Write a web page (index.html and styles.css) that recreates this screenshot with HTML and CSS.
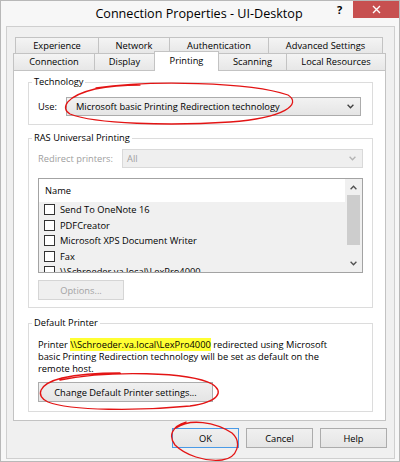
FILE: index.html
```html
<!DOCTYPE html>
<html lang="en">
<head>
    <meta charset="UTF-8">
    <title>Connection Properties - UI-Desktop</title>
    <link rel="stylesheet" href="styles.css">
</head>
<body>
<div class="window">
    <!-- Title bar -->
    <div class="titlebar">
        <span></span>
        <span class="title">Connection Properties - UI-Desktop</span>
        <div class="controls">
            <span class="help">?</span>
            <span class="close">
                <svg width="9" height="9" viewBox="0 0 9 9"><path d="M1 1 L8 8 M8 1 L1 8" stroke="#fff" stroke-width="1.4"/></svg>
            </span>
        </div>
    </div>

    <div class="client">
        <div class="tab-row back">
            <div class="tab" style="width:84px">Experience</div>
            <div class="tab" style="width:72px">Network</div>
            <div class="tab" style="width:100px">Authentication</div>
            <div class="tab" style="width:115px">Advanced Settings</div>
        </div>
        <div class="tab-row front">
            <div class="tab" style="width:82px">Connection</div>
            <div class="tab" style="width:61px">Display</div>
            <div class="tab selected" style="width:65px">Printing</div>
            <div class="tab" style="width:69px">Scanning</div>
            <div class="tab" style="width:100px">Local Resources</div>
        </div>

        <div class="panel">
            <fieldset class="group tech">
                <legend>Technology</legend>
                <div class="field-row">
                    <label class="use-label">Use:</label>
                    <div class="combo">
                        <span>Microsoft basic Printing Redirection technology</span>
                        <svg width="7" height="5" viewBox="0 0 7 5"><path d="M0.6 0.8 L3.5 3.8 L6.4 0.8" fill="none" stroke="#404040" stroke-width="1.3"/></svg>
                    </div>
                </div>
            </fieldset>

            <fieldset class="group ras">
                <legend>RAS Universal Printing</legend>
                <div class="field-row">
                    <label class="redirect-label disabled">Redirect printers:</label>
                    <div class="combo combo-disabled">
                        <span>All</span>
                        <svg width="7" height="5" viewBox="0 0 7 5"><path d="M0.6 0.8 L3.5 3.8 L6.4 0.8" fill="none" stroke="#b4b4b4" stroke-width="1.3"/></svg>
                    </div>
                </div>

                <div class="printer-list">
                    <div class="list-main">
                        <div class="list-header">Name</div>
                        <div class="list-row"><span class="check"></span>Send To OneNote 16</div>
                        <div class="list-row"><span class="check"></span>PDFCreator</div>
                        <div class="list-row"><span class="check"></span>Microsoft XPS Document Writer</div>
                        <div class="list-row"><span class="check"></span>Fax</div>
                        <div class="list-row"><span class="check"></span>\\Schroeder.va.local\LexPro4000</div>
                    </div>
                    <div class="scrollbar">
                        <div class="arrow up">
                            <svg width="7" height="5" viewBox="0 0 7 5"><path d="M0.6 4.2 L3.5 1.2 L6.4 4.2" fill="none" stroke="#505050" stroke-width="1.3"/></svg>
                        </div>
                        <div class="thumb"></div>
                        <div class="track"></div>
                        <div class="arrow down">
                            <svg width="7" height="5" viewBox="0 0 7 5"><path d="M0.6 0.8 L3.5 3.8 L6.4 0.8" fill="none" stroke="#505050" stroke-width="1.3"/></svg>
                        </div>
                    </div>
                </div>

                <button class="btn btn-disabled options-btn">Options...</button>
            </fieldset>

            <fieldset class="group default-printer">
                <legend>Default Printer</legend>
                <p class="printer-note">Printer <span class="highlight">\\Schroeder.va.local\LexPro4000</span> redirected using Microsoft<br>basic Printing Redirection technology will be set as default on the<br>remote host.</p>
                <button class="btn change-btn">Change Default Printer settings...</button>
            </fieldset>
        </div>

        <div class="dialog-buttons">
            <button class="btn default">OK</button>
            <button class="btn">Cancel</button>
            <button class="btn">Help</button>
        </div>
    </div>

    <!-- red pen marks drawn over the dialog -->
    <svg class="marks" width="400" height="462" viewBox="0 0 400 462">
        <path d="M96 88 C150 80, 250 82, 288 95 C302 104, 285 118, 230 122 C170 126, 95 124, 70 114 C60 108, 66 96, 95 89 C110 86, 125 85, 140 85"/>
        <path d="M60 380 C110 370, 190 372, 212 384 C225 392, 218 402, 190 406 C140 411, 70 411, 48 402 C35 396, 38 384, 62 378 C80 374, 100 373, 120 373"/>
        <path d="M176 428 C190 418, 215 422, 232 433 C242 442, 238 458, 222 460 C205 462, 185 455, 175 445 C168 436, 172 426, 186 422"/>
    </svg>
</div>
</body>
</html>
```

FILE: styles.css
```css
body {
    margin: 0;
    font-family: "Open Sans", "Noto Sans", sans-serif;
    font-size: 9.3px;
    color: #000;
    background: #fff;
}

.window {
    position: relative;
    width: 400px;
    height: 462px;
    box-sizing: border-box;
    border: 1px solid #b8b8b8;
    background-color: #f7f7f7;
}

.titlebar {
    display: grid;
    grid-template-columns: 1fr auto 1fr;
    height: 25px;
}

.title {
    font-size: 12.6px;
    line-height: 26px;
    padding-right: 2px;
}

.controls {
    justify-self: end;
    display: flex;
    align-items: flex-start;
}

.help {
    width: 21px;
    margin-right: 3px;
    font-weight: bold;
    font-size: 11px;
    line-height: 18px;
    text-align: center;
}

.close {
    width: 46px;
    height: 17px;
    background-color: #c75050;
    display: flex;
    align-items: center;
    justify-content: center;
}

.client {
    width: 389px;
    height: 433px;
    box-sizing: border-box;
    margin: 0 4px 0 5px;
    border: 1px solid #cfcfcf;
    background-color: #f0f0f0;
    padding: 10px 8px 0 6px;
}

/* tabs */
.tab-row {
    display: flex;
    align-items: flex-start;
}

.tab-row.back {
    padding-left: 2px;
    height: 16px;
}

.tab-row.front {
    height: 17px;
}

.tab {
    box-sizing: border-box;
    border: 1px solid #c3c3c3;
    border-bottom: none;
    background: linear-gradient(#f4f4f4, #e7e7e7);
    text-align: center;
    margin-left: -1px;
}

.tab:first-child {
    margin-left: 0;
}

.back .tab {
    height: 16px;
    line-height: 15px;
}

.front .tab {
    height: 17px;
    line-height: 16px;
}

.front .tab.selected {
    position: relative;
    z-index: 1;
    height: 20px;
    margin-top: -2px;
    margin-bottom: -1px;
    background: #fff;
    line-height: 17px;
}

.panel {
    border: 1px solid #c3c3c3;
    background-color: #fff;
    padding: 5px 12px 8px 14px;
}

/* group boxes */
.group {
    margin: 0;
    min-width: 0;
    border: 1px solid #dcdcdc;
}

.group legend {
    padding: 0 2px;
    margin-left: -6px;
    line-height: 12px;
}

.tech {
    padding: 9px 11px 8px 9px;
}

.ras {
    margin-top: 7px;
    padding: 5px 9px 7px 9px;
}

.default-printer {
    margin-top: 9px;
    padding: 10px 11px 9px 9px;
}

.field-row {
    display: flex;
    align-items: center;
}

.use-label {
    width: 28px;
}

.redirect-label {
    width: 84px;
}

.disabled {
    color: #a0a0a0;
}

.combo {
    flex: 1;
    height: 19px;
    box-sizing: border-box;
    border: 1px solid #acacac;
    background: linear-gradient(#f2f2f2, #e5e5e5);
    display: flex;
    align-items: center;
    justify-content: space-between;
    padding: 0 6px 0 9px;
}

.combo-disabled {
    border-color: #d9d9d9;
    background: #efefef;
    color: #a0a0a0;
    padding-left: 4px;
}

/* printer list */
.printer-list {
    margin-top: 10px;
    height: 95px;
    box-sizing: border-box;
    border: 1px solid #a3a3a3;
    display: flex;
    background-color: #f0f0f0;
}

.list-main {
    flex: 1;
    overflow: hidden;
}

.list-header {
    height: 23px;
    line-height: 24px;
    padding-left: 6px;
    background-color: #fff;
}

.list-row {
    height: 15.5px;
    display: flex;
    align-items: center;
    padding-left: 5px;
}

.check {
    width: 11px;
    height: 11px;
    box-sizing: border-box;
    border: 1px solid #333;
    background-color: #fff;
    margin-right: 5px;
}

.scrollbar {
    width: 17px;
    display: flex;
    flex-direction: column;
    background-color: #f0f0f0;
}

.arrow {
    display: flex;
    align-items: center;
    justify-content: center;
}

.arrow.up {
    height: 16px;
}

.arrow.down {
    height: 17px;
}

.thumb {
    height: 50px;
    margin: 0 2px;
    background-color: #cdcdcd;
}

.track {
    flex: 1;
}

/* buttons */
.btn {
    display: block;
    box-sizing: border-box;
    height: 20px;
    padding: 0;
    border: 1px solid #acacac;
    background: linear-gradient(#f0f0f0, #e5e5e5);
    font-family: inherit;
    font-size: 9.3px;
    color: #000;
    text-align: center;
}

.btn-disabled {
    border-color: #d5d5d5;
    background: #efefef;
    color: #a3a3a3;
}

.options-btn {
    margin-top: 7px;
    width: 86px;
}

.printer-note {
    margin: 0;
    line-height: 12px;
}

.highlight {
    background-color: #ffff33;
}

.change-btn {
    margin-top: 7px;
    width: 175px;
}

.dialog-buttons {
    display: flex;
    justify-content: flex-end;
    gap: 7px;
    margin-top: 7px;
    margin-right: -1px;
}

.dialog-buttons .btn {
    width: 67px;
}

.btn.default {
    border-color: #4a9ae6;
}

.marks {
    position: absolute;
    left: -1px;
    top: -1px;
    pointer-events: none;
}

.marks path {
    fill: none;
    stroke: #e31414;
    stroke-width: 1.3;
    stroke-linecap: round;
}
```
